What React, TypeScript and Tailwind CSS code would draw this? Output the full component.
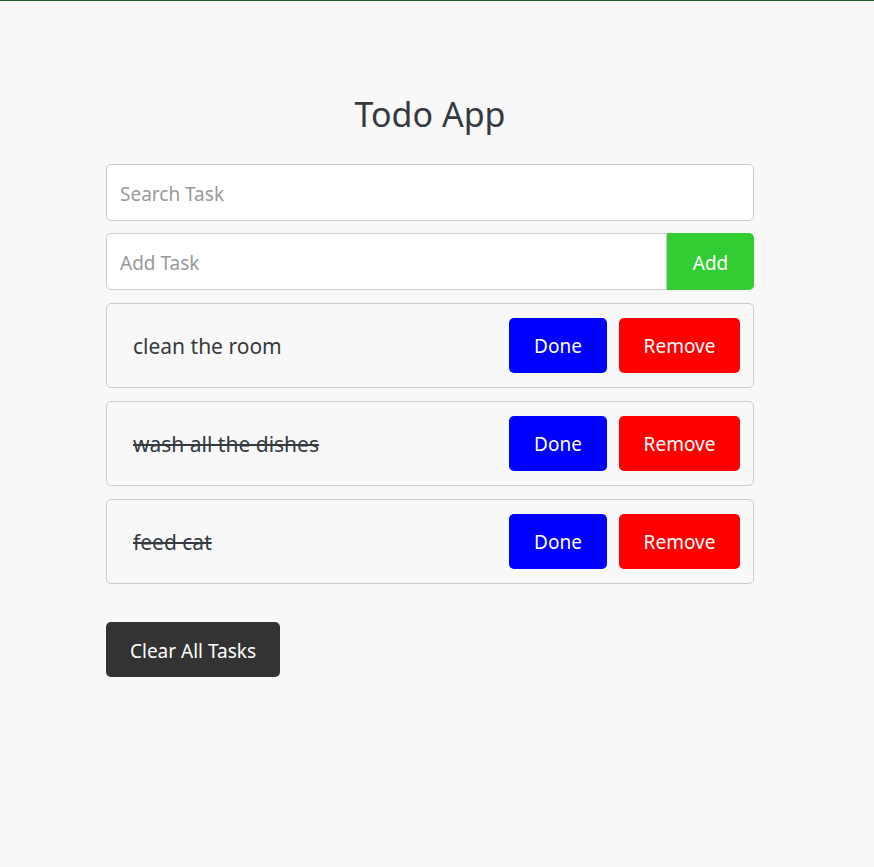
import React from "react";

const tasks = [
  { text: "clean the room", done: false },
  { text: "wash all the dishes", done: true },
  { text: "feed cat", done: true },
];

export default function App() {
  return (
    <div
      className="min-h-[867px] bg-[#f8f8f8] border-t-[1px] border-[#1e5c1e] text-[#333]"
      style={{ fontFamily: '"Noto Sans", "Open Sans", sans-serif' }}
    >
      <div className="w-[648px] ml-[106px] pt-[89px]">
        <h1 className="text-center text-[34px] leading-[48px] font-normal text-[#343a40] mb-[26px]">
          Todo App
        </h1>
        <input
          placeholder="Search Task"
          className="block w-full h-[57px] px-[13px] pt-[2px] text-[19px] bg-white border border-[#ccc] rounded-[5px] outline-none placeholder:text-[#999]"
        />
        <div className="flex mt-[12px] h-[57px]">
          <input
            placeholder="Add Task"
            className="flex-1 h-full px-[13px] pt-[2px] text-[19px] bg-white border border-[#ccc] rounded-l-[5px] outline-none placeholder:text-[#999]"
          />
          <button className="w-[87px] h-full pt-[3px] bg-[#32cd32] text-white text-[19px] rounded-r-[5px]">
            Add
          </button>
        </div>
        <div className="flex flex-col gap-[13px] mt-[13px]">
          {tasks.map((t) => (
            <div
              key={t.text}
              className="flex items-center justify-between border border-[#ccc] rounded-[5px] pl-[26px] pr-[13px] py-[14px]"
            >
              <span className={"text-[21px] pt-[2px] text-[#343a40] " + (t.done ? "line-through" : "")}>{t.text}</span>
              <div className="flex gap-[12px]">
                <button className="w-[98px] h-[55px] pt-[2px] bg-[#0000ff] text-white text-[19px] rounded-[5px]">
                  Done
                </button>
                <button className="w-[121px] h-[55px] pt-[2px] bg-[#ff0000] text-white text-[19px] rounded-[5px]">
                  Remove
                </button>
              </div>
            </div>
          ))}
        </div>
        <button className="mt-[38px] w-[174px] h-[55px] pt-[3px] bg-[#333] text-white text-[19px] rounded-[5px]">
          Clear All Tasks
        </button>
      </div>
    </div>
  );
}
